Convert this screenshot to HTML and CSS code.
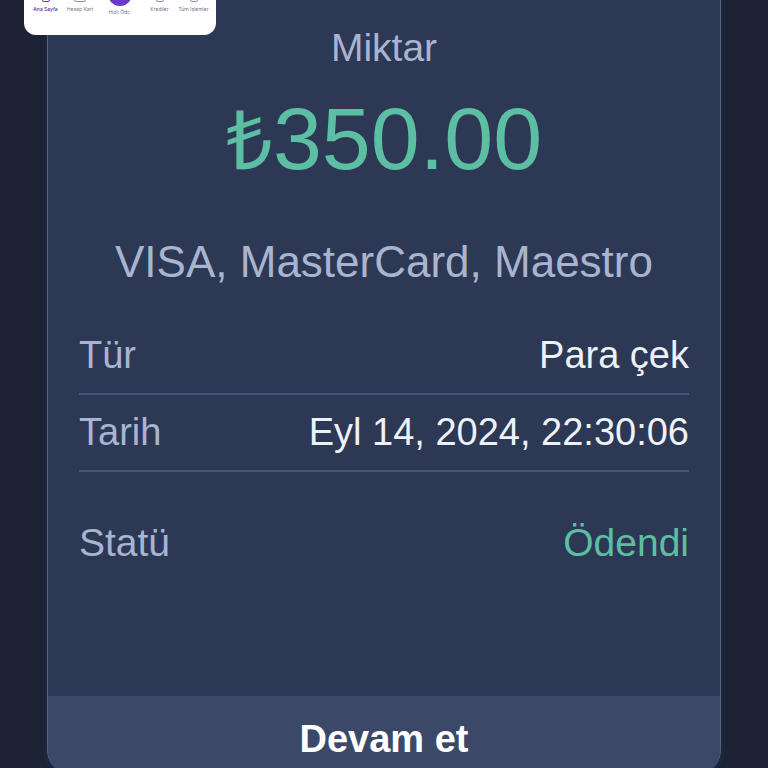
FILE: index.html
```html
<!DOCTYPE html>
<html lang="tr">
<head>
    <meta charset="UTF-8">
    <meta name="viewport" content="width=device-width, initial-scale=1.0">
    <title>Miktar</title>
    <link rel="stylesheet" href="styles.css">
</head>
<body>
    <div class="tabbar">
        <div class="tab tab-active">
            <span class="tab-icon icon-home"></span>
            <span class="tab-label">Ana Sayfa</span>
        </div>
        <div class="tab">
            <span class="tab-icon icon-card"></span>
            <span class="tab-label">Hesap Kart</span>
        </div>
        <div class="tab tab-mid">
            <span class="tab-circle"></span>
            <span class="tab-label">Hızlı Ödc.</span>
        </div>
        <div class="tab">
            <span class="tab-icon"></span>
            <span class="tab-label">Krediler</span>
        </div>
        <div class="tab">
            <span class="tab-icon"></span>
            <span class="tab-label">Tüm İşlemler</span>
        </div>
    </div>
    <main class="card">
        <div class="card-body">
            <h2 class="amount-label">Miktar</h2>
            <div class="amount"><span class="lira">₺</span>350.00</div>
            <div class="methods">VISA, MasterCard, Maestro</div>
            <div class="rows">
                <div class="row row-line">
                    <span class="row-key">Tür</span>
                    <span class="row-val">Para çek</span>
                </div>
                <div class="row row-line">
                    <span class="row-key">Tarih</span>
                    <span class="row-val">Eyl 14, 2024, 22:30:06</span>
                </div>
                <div class="row row-status">
                    <span class="row-key">Statü</span>
                    <span class="row-val paid">Ödendi</span>
                </div>
            </div>
        </div>
        <div class="card-btn">Devam et</div>
    </main>
</body>
</html>
```

FILE: styles.css
```css
body {
    margin: 0;
    height: 768px;
    overflow: hidden;
    background-color: #1c2335;
    font-family: "Liberation Sans", Arial, sans-serif;
    position: relative;
}
.card {
    box-sizing: border-box;
    width: 674px;
    height: 774px;
    margin-left: 47px;
    background-color: #2d3854;
    border-left: 1px solid #59627c;
    border-right: 1px solid #59627c;
    border-radius: 0 0 24px 24px;
    box-shadow: 0 0 3px 3px #1d2840;
    display: flex;
    flex-direction: column;
    overflow: hidden;
}
.card-body {
    flex: 1;
    padding: 27px 31px 0;
}
.amount-label {
    margin: 0;
    font-size: 39px;
    font-weight: normal;
    line-height: 42px;
    text-align: center;
    color: #a9b5d0;
}
.amount {
    margin-top: 20px;
    font-size: 88px;
    line-height: 100px;
    text-align: center;
    color: #5cbfa3;
}
.lira {
    font-size: 82px;
    line-height: 1;
}
.methods {
    margin-top: 48px;
    font-size: 44px;
    line-height: 50px;
    text-align: center;
    color: #a9b5d0;
}
.rows {
    margin-top: 31px;
}
.row {
    display: flex;
    justify-content: space-between;
    align-items: center;
    font-size: 38px;
}
.row-line {
    box-sizing: border-box;
    height: 77px;
    border-bottom: 2px solid #47557a;
}
.row-status {
    height: 70px;
    margin-top: 36px;
    font-size: 39px;
}
.row-key {
    color: #a9b5d0;
}
.row-val {
    color: #edf1f8;
}
.paid {
    color: #5cbfa3;
}
.card-btn {
    height: 78px;
    background-color: #3c4868;
    color: #fff;
    font-size: 38px;
    font-weight: bold;
    text-align: center;
    line-height: 86px;
}

.tabbar {
    position: absolute;
    left: 24px;
    top: -20px;
    width: 192px;
    height: 55px;
    box-sizing: border-box;
    padding: 0 5px 0 4px;
    background-color: #fff;
    border-radius: 0 0 12px 12px;
    display: grid;
    grid-template-columns: 35px 34px 46px 33px 35px;
    z-index: 2;
}
.tab {
    display: flex;
    flex-direction: column;
    align-items: center;
    padding-top: 15px;
}
.tab-icon {
    width: 8px;
    height: 7px;
    border: 1px solid #8d92a3;
    border-radius: 2px;
    box-sizing: border-box;
}
.icon-card {
    width: 12px;
}
.tab-active .tab-icon {
    border-color: #5b2fc0;
}
.tab-circle {
    width: 24px;
    height: 24px;
    margin-top: -13px;
    border-radius: 50%;
    background-color: #6b3cc9;
}
.tab-label {
    margin-top: 3px;
    font-family: Inter, sans-serif;
    font-size: 5px;
    line-height: 8px;
    white-space: nowrap;
    color: #70758a;
}
.tab-active .tab-label {
    color: #4d2aa6;
    font-weight: 500;
}
.tab-mid .tab-label {
    margin-top: 2px;
}
```
